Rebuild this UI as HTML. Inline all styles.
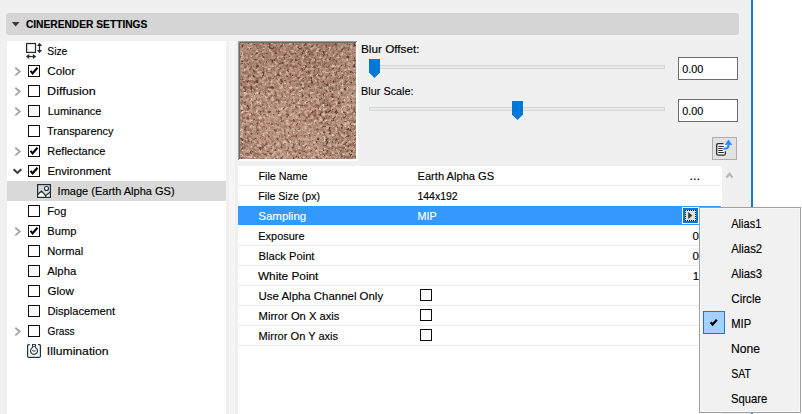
<!DOCTYPE html>
<html><head><meta charset="utf-8"><title>CineRender Settings</title>
<style>
html,body{margin:0;padding:0;}
body{width:802px;height:414px;position:relative;overflow:hidden;background:#f0f0f0;font-family:"Liberation Sans",sans-serif;font-size:12px;}
.ts{left:0;top:0;pointer-events:none;font-family:"Liberation Sans",sans-serif;font-size:11.5px;fill:#000;stroke:#000;stroke-width:0.15px;}
svg{position:absolute;overflow:visible;}
.cb{position:absolute;width:10px;height:10px;border:1px solid #0a0a0a;background:#fff;}
</style></head><body>
<div style="position:absolute;left:753px;top:0px;width:49px;height:414px;background:#fff;"></div>
<div style="position:absolute;left:751px;top:0px;width:2px;height:414px;background:#1478d4;"></div>
<div style="position:absolute;left:6px;top:13px;width:733px;height:22px;background:#d5d5d5;border-radius:3px;"></div>
<svg style="left:11px;top:21px" width="10" height="7" viewBox="0 0 10 7"><path d="M0.8 1 L8.6 1 L4.7 5.6 Z" fill="#3a3a3a"/></svg>
<svg class="ts" width="802" height="414" viewBox="0 0 802 414"><text x="25.88" y="28.00" textLength="121.52" lengthAdjust="spacingAndGlyphs" font-size="11" font-weight="bold">CINERENDER SETTINGS</text></svg>
<div style="position:absolute;left:7px;top:41px;width:219px;height:373px;background:#fff;"></div>
<div style="position:absolute;left:7px;top:181px;width:219px;height:20px;background:#d9d9d9;"></div>
<svg class="ts" width="802" height="414" viewBox="0 0 802 414"><text x="47.34" y="55.00" textLength="20.02" lengthAdjust="spacingAndGlyphs">Size</text><text x="47.21" y="75.00" textLength="27.97" lengthAdjust="spacingAndGlyphs">Color</text></svg>
<svg style="left:14px;top:67px" width="8" height="10" viewBox="0 0 8 10"><path d="M1.3 0.8 L5.8 4.6 L1.3 8.4" fill="none" stroke="#a3a3a3" stroke-width="1.8"/></svg>
<div class="cb" style="left:28px;top:65px"></div>
<svg style="left:28px;top:65px" width="12" height="12" viewBox="0 0 12 12"><path d="M2.6 5.9 L4.6 8.3 L9.5 2.7" fill="none" stroke="#000" stroke-width="2.1"/></svg>
<svg class="ts" width="802" height="414" viewBox="0 0 802 414"><text x="47.07" y="95.00" textLength="48.64" lengthAdjust="spacingAndGlyphs">Diffusion</text></svg>
<svg style="left:14px;top:87px" width="8" height="10" viewBox="0 0 8 10"><path d="M1.3 0.8 L5.8 4.6 L1.3 8.4" fill="none" stroke="#a3a3a3" stroke-width="1.8"/></svg>
<div class="cb" style="left:28px;top:85px"></div>
<svg class="ts" width="802" height="414" viewBox="0 0 802 414"><text x="47.70" y="115.00" textLength="53.68" lengthAdjust="spacingAndGlyphs">Luminance</text></svg>
<svg style="left:14px;top:107px" width="8" height="10" viewBox="0 0 8 10"><path d="M1.3 0.8 L5.8 4.6 L1.3 8.4" fill="none" stroke="#a3a3a3" stroke-width="1.8"/></svg>
<div class="cb" style="left:28px;top:105px"></div>
<svg class="ts" width="802" height="414" viewBox="0 0 802 414"><text x="47.06" y="135.00" textLength="66.46" lengthAdjust="spacingAndGlyphs">Transparency</text></svg>
<div class="cb" style="left:28px;top:125px"></div>
<svg class="ts" width="802" height="414" viewBox="0 0 802 414"><text x="47.30" y="155.00" textLength="58.08" lengthAdjust="spacingAndGlyphs">Reflectance</text></svg>
<svg style="left:14px;top:147px" width="8" height="10" viewBox="0 0 8 10"><path d="M1.3 0.8 L5.8 4.6 L1.3 8.4" fill="none" stroke="#a3a3a3" stroke-width="1.8"/></svg>
<div class="cb" style="left:28px;top:145px"></div>
<svg style="left:28px;top:145px" width="12" height="12" viewBox="0 0 12 12"><path d="M2.6 5.9 L4.6 8.3 L9.5 2.7" fill="none" stroke="#000" stroke-width="2.1"/></svg>
<svg class="ts" width="802" height="414" viewBox="0 0 802 414"><text x="47.48" y="175.00" textLength="63.20" lengthAdjust="spacingAndGlyphs">Environment</text></svg>
<svg style="left:12px;top:168px" width="11" height="7" viewBox="0 0 11 7"><path d="M1.6 1.2 L5.45 4.9 L9.3 1.2" fill="none" stroke="#3a3a3a" stroke-width="2"/></svg>
<div class="cb" style="left:28px;top:165px"></div>
<svg style="left:28px;top:165px" width="12" height="12" viewBox="0 0 12 12"><path d="M2.6 5.9 L4.6 8.3 L9.5 2.7" fill="none" stroke="#000" stroke-width="2.1"/></svg>
<svg class="ts" width="802" height="414" viewBox="0 0 802 414"><text x="57.59" y="195.00" textLength="117.00" lengthAdjust="spacingAndGlyphs">Image (Earth Alpha GS)</text></svg>
<svg style="left:37px;top:184px" width="14" height="14" viewBox="0 0 14 14"><path d="M0.6 10.5 L4.5 7.2 L8.6 11.7 L13.4 8.1 V13.4 H0.6 Z" fill="#fff"/><g fill="none" stroke="#222c33" stroke-width="1.2"><rect x="0.6" y="0.6" width="12.8" height="12.8"/><path d="M0.6 10.5 L4.5 7.2 L8.6 11.7 L13.4 8.1 M8.6 11.7 V13.4"/><circle cx="9.5" cy="4.5" r="2" fill="#fff" stroke-width="1.1"/></g></svg>
<svg class="ts" width="802" height="414" viewBox="0 0 802 414"><text x="47.30" y="215.00" textLength="19.01" lengthAdjust="spacingAndGlyphs">Fog</text></svg>
<div class="cb" style="left:28px;top:205px"></div>
<svg class="ts" width="802" height="414" viewBox="0 0 802 414"><text x="47.29" y="235.00" textLength="29.07" lengthAdjust="spacingAndGlyphs">Bump</text></svg>
<svg style="left:14px;top:227px" width="8" height="10" viewBox="0 0 8 10"><path d="M1.3 0.8 L5.8 4.6 L1.3 8.4" fill="none" stroke="#a3a3a3" stroke-width="1.8"/></svg>
<div class="cb" style="left:28px;top:225px"></div>
<svg style="left:28px;top:225px" width="12" height="12" viewBox="0 0 12 12"><path d="M2.6 5.9 L4.6 8.3 L9.5 2.7" fill="none" stroke="#000" stroke-width="2.1"/></svg>
<svg class="ts" width="802" height="414" viewBox="0 0 802 414"><text x="47.29" y="255.00" textLength="35.95" lengthAdjust="spacingAndGlyphs">Normal</text></svg>
<div class="cb" style="left:28px;top:245px"></div>
<svg class="ts" width="802" height="414" viewBox="0 0 802 414"><text x="47.28" y="275.00" textLength="29.02" lengthAdjust="spacingAndGlyphs">Alpha</text></svg>
<div class="cb" style="left:28px;top:265px"></div>
<svg class="ts" width="802" height="414" viewBox="0 0 802 414"><text x="47.52" y="295.00" textLength="26.45" lengthAdjust="spacingAndGlyphs">Glow</text></svg>
<div class="cb" style="left:28px;top:285px"></div>
<svg class="ts" width="802" height="414" viewBox="0 0 802 414"><text x="47.49" y="315.00" textLength="67.59" lengthAdjust="spacingAndGlyphs">Displacement</text></svg>
<div class="cb" style="left:28px;top:305px"></div>
<svg class="ts" width="802" height="414" viewBox="0 0 802 414"><text x="47.59" y="335.00" textLength="26.97" lengthAdjust="spacingAndGlyphs">Grass</text></svg>
<svg style="left:14px;top:327px" width="8" height="10" viewBox="0 0 8 10"><path d="M1.3 0.8 L5.8 4.6 L1.3 8.4" fill="none" stroke="#a3a3a3" stroke-width="1.8"/></svg>
<div class="cb" style="left:28px;top:325px"></div>
<svg class="ts" width="802" height="414" viewBox="0 0 802 414"><text x="46.88" y="355.00" textLength="61.70" lengthAdjust="spacingAndGlyphs">Illumination</text></svg>
<svg style="left:25px;top:42px" width="18" height="18" viewBox="0 0 18 18"><rect x="1.6" y="1.5" width="8.9" height="8.9" fill="none" stroke="#212c33" stroke-width="1.25"/><g fill="#212c33" stroke="none"><path d="M11.9 4.1 L14.5 0.8 L17.1 4.1 Z M11.9 7.9 L14.5 11.2 L17.1 7.9 Z"/><rect x="13.9" y="3" width="1.2" height="6"/><path d="M4.2 11.9 L0.9 14.5 L4.2 17.1 Z M7.9 11.9 L11.2 14.5 L7.9 17.1 Z"/><rect x="3" y="13.9" width="6" height="1.2"/></g></svg>
<svg style="left:27px;top:344px" width="14" height="14" viewBox="0 0 14 14"><g fill="none" stroke="#25323a" stroke-width="1.2"><path d="M2.8 0.6 H1.8 Q0.6 0.6 0.6 1.8 V12.2 Q0.6 13.4 1.8 13.4 H12.2 Q13.4 13.4 13.4 12.2 V1.8 Q13.4 0.6 12.2 0.6 H11"/><rect x="5.5" y="0.5" width="3" height="1.8" stroke-width="0.9"/><path d="M5.5 2.3 L5.3 3.84 A3.5 3.5 0 1 0 8.7 3.84 L8.5 2.3" stroke-width="1.15"/><path d="M5.3 6.1 L6.3 7.4 L7 6.3 L7.8 7.5 L8.7 6.5" stroke-width="0.85"/></g></svg>
<div style="position:absolute;left:229px;top:41px;width:6px;height:373px;background:#f6f6f6;"></div>
<svg style="left:238px;top:41px" width="120" height="120" viewBox="0 0 120 120">
<defs><filter id="tx" x="0" y="0" width="100%" height="100%" color-interpolation-filters="sRGB">
<feTurbulence type="fractalNoise" baseFrequency="0.33" numOctaves="3" seed="11" result="n"/>
<feColorMatrix in="n" type="matrix" values="0.55 0 0 0 0.395  0.55 0 0 0 0.245  0.52 0 0 0 0.185  0 0 0 0 1" result="c"/>
<feColorMatrix in="n" type="matrix" values="0 0 0 0 0.87  0 0 0 0 0.79  0 0 0 0 0.73  0 5 0 0 -2.85" result="hi"/>
<feColorMatrix in="n" type="matrix" values="0 0 0 0 0.36  0 0 0 0 0.23  0 0 0 0 0.19  0 0 5 0 -2.85" result="lo"/>
<feTurbulence type="fractalNoise" baseFrequency="0.03" numOctaves="2" seed="4" result="l"/>
<feColorMatrix in="l" type="matrix" values="0 0 0 0 0.78  0 0 0 0 0.66  0 0 0 0 0.59  0.9 0 0 0 -0.3" result="lw"/>
<feComposite in="lw" in2="c" operator="over" result="c2"/>
<feComposite in="hi" in2="c2" operator="over" result="c3"/>
<feComposite in="lo" in2="c3" operator="over" result="c4"/>
<feGaussianBlur in="c4" stdDeviation="0.35"/>
</filter><radialGradient id="lg" cx="0.33" cy="0.72" r="0.45"><stop offset="0" stop-color="#d6b096" stop-opacity="0.26"/><stop offset="1" stop-color="#d6b096" stop-opacity="0"/></radialGradient><linearGradient id="dg" x1="0" y1="0" x2="0" y2="1"><stop offset="0" stop-color="#7a5040" stop-opacity="0.16"/><stop offset="0.5" stop-color="#7a5040" stop-opacity="0"/></linearGradient></defs>
<rect x="0" y="0" width="120" height="120" fill="#fff"/>
<rect x="2" y="2" width="116" height="116" fill="#a8856f" filter="url(#tx)"/>
<rect x="2" y="2" width="116" height="116" fill="url(#lg)"/>
<rect x="2" y="2" width="116" height="116" fill="url(#dg)"/>
<path d="M0.5 119 V0.5 H119" fill="none" stroke="#9a9a9a" stroke-width="1"/>
<path d="M1.5 118 V1.5 H118" fill="none" stroke="#6a6a6a" stroke-width="1"/>
</svg>
<svg class="ts" width="802" height="414" viewBox="0 0 802 414"><text x="361.04" y="52.70" textLength="58.42" lengthAdjust="spacingAndGlyphs">Blur Offset:</text><text x="361.11" y="94.90" textLength="52.47" lengthAdjust="spacingAndGlyphs">Blur Scale:</text></svg>
<div style="position:absolute;left:369px;top:65px;width:296px;height:4px;background:#e7eaea;box-sizing:border-box;border:1px solid #d6d6d6;"></div>
<svg style="left:369px;top:59px" width="11" height="19" viewBox="0 0 11 19"><path d="M0 0 H11 V13.4 L5.5 19 L0 13.4 Z" fill="#0078d7"/></svg>
<div style="position:absolute;left:369px;top:107px;width:296px;height:4px;background:#e7eaea;box-sizing:border-box;border:1px solid #d6d6d6;"></div>
<svg style="left:512px;top:101px" width="11" height="19" viewBox="0 0 11 19"><path d="M0 0 H11 V13.4 L5.5 19 L0 13.4 Z" fill="#0078d7"/></svg>
<div style="position:absolute;left:678px;top:57px;width:60px;height:23px;background:#fff;box-sizing:border-box;border:1px solid #6d6d6d;"></div>
<svg class="ts" width="802" height="414" viewBox="0 0 802 414"><text x="682.18" y="73.00" textLength="21.04" lengthAdjust="spacingAndGlyphs">0.00</text></svg>
<div style="position:absolute;left:678px;top:99px;width:60px;height:23px;background:#fff;box-sizing:border-box;border:1px solid #6d6d6d;"></div>
<svg class="ts" width="802" height="414" viewBox="0 0 802 414"><text x="682.18" y="115.00" textLength="21.04" lengthAdjust="spacingAndGlyphs">0.00</text></svg>
<div style="position:absolute;left:712px;top:137px;width:25px;height:23px;background:#e1e1e1;box-sizing:border-box;border:1px solid #adadad;"></div>
<svg style="left:712px;top:137px" width="25" height="23" viewBox="0 0 25 23"><rect x="4.7" y="6.7" width="8.6" height="11.5" rx="1.5" fill="#f7f7f7"/><g fill="none" stroke="#262e33" stroke-width="1.3"><path d="M11.4 6.7 H6.2 Q4.7 6.7 4.7 8.2 V16.7 Q4.7 18.2 6.2 18.2 H11.8 Q13.3 18.2 13.3 16.7 V14.2"/><path d="M6.3 9.5 H11.8 M6.3 11.5 H10.6 M6.3 13.5 H10.6 M6.3 15.45 H11.8" stroke-width="1.05"/></g><path d="M16.5 7 V8.4 Q16.5 11.6 12.2 11.7" fill="none" stroke="#2a8bff" stroke-width="2.1" stroke-linecap="round"/><path d="M12.7 8.1 L16.5 2.6 L20.3 8.1 L16.5 7.4 Z" fill="#2a8bff"/></svg>
<div style="position:absolute;left:238px;top:166px;width:484px;height:248px;background:#fff;"></div>
<div style="position:absolute;left:238px;top:185px;width:483px;height:1px;background:#ebebeb;"></div>
<div style="position:absolute;left:238px;top:245px;width:483px;height:1px;background:#ebebeb;"></div>
<div style="position:absolute;left:238px;top:265px;width:483px;height:1px;background:#ebebeb;"></div>
<div style="position:absolute;left:238px;top:285px;width:483px;height:1px;background:#ebebeb;"></div>
<div style="position:absolute;left:238px;top:305px;width:483px;height:1px;background:#ebebeb;"></div>
<div style="position:absolute;left:238px;top:325px;width:483px;height:1px;background:#ebebeb;"></div>
<div style="position:absolute;left:238px;top:345px;width:483px;height:1px;background:#ebebeb;"></div>
<div style="position:absolute;left:238px;top:206px;width:483px;height:19px;background:#3399ff;"></div>
<svg class="ts" width="802" height="414" viewBox="0 0 802 414"><text x="258.42" y="180.00" textLength="49.16" lengthAdjust="spacingAndGlyphs">File Name</text><text x="258.33" y="200.00" textLength="61.72" lengthAdjust="spacingAndGlyphs">File Size (px)</text><text x="258.28" y="220.00" textLength="47.95" lengthAdjust="spacingAndGlyphs" fill="#fff" stroke="#fff">Sampling</text><text x="258.30" y="240.00" textLength="46.29" lengthAdjust="spacingAndGlyphs">Exposure</text><text x="258.58" y="260.00" textLength="55.89" lengthAdjust="spacingAndGlyphs">Black Point</text><text x="257.95" y="280.00" textLength="60.43" lengthAdjust="spacingAndGlyphs">White Point</text><text x="258.62" y="300.00" textLength="124.50" lengthAdjust="spacingAndGlyphs">Use Alpha Channel Only</text><text x="258.58" y="320.00" textLength="80.82" lengthAdjust="spacingAndGlyphs">Mirror On X axis</text><text x="258.59" y="340.00" textLength="79.51" lengthAdjust="spacingAndGlyphs">Mirror On Y axis</text><text x="417.49" y="180.00" textLength="76.71" lengthAdjust="spacingAndGlyphs">Earth Alpha GS</text><text x="417.40" y="200.00" textLength="40.32" lengthAdjust="spacingAndGlyphs">144x192</text><text x="417.52" y="220.00" textLength="19.14" lengthAdjust="spacingAndGlyphs" fill="#fff" stroke="#fff">MIP</text><text x="689.44" y="180.30" textLength="10.61" lengthAdjust="spacingAndGlyphs" font-size="13">...</text><text x="692.55" y="240.00" textLength="6.40" lengthAdjust="spacingAndGlyphs">0</text><text x="692.55" y="260.00" textLength="6.40" lengthAdjust="spacingAndGlyphs">0</text><text x="692.73" y="280.00" textLength="6.40" lengthAdjust="spacingAndGlyphs">1</text></svg>
<div class="cb" style="left:420px;top:289px"></div>
<div class="cb" style="left:420px;top:309px"></div>
<div class="cb" style="left:420px;top:329px"></div>
<svg style="left:725px;top:171px" width="9" height="8" viewBox="0 0 9 8"><path d="M1.4 6.5 L4.5 2.7 L7.6 6.5" fill="none" stroke="#b8b8b8" stroke-width="2.2"/></svg>
<div style="position:absolute;left:682px;top:207px;width:17px;height:17px;background:#fff;"></div>
<div style="position:absolute;left:683px;top:208px;width:15px;height:15px;background:#0078d7;"></div>
<div style="position:absolute;left:685px;top:210px;width:11px;height:11px;background:#e1e1e1;box-sizing:border-box;border:1px dotted #000;"></div>
<svg style="left:685px;top:210px" width="11" height="11" viewBox="0 0 11 11"><path d="M3.2 2 L7.3 5.5 L3.2 9 Z" fill="#3a3a3a"/></svg>
<div style="position:absolute;left:699px;top:207px;width:102px;height:206px;background:#f1f1f1;box-sizing:border-box;border:1px solid #a0a0a0;box-shadow:inset 0 0 0 1px #f8f8f8;"></div>
<div style="position:absolute;left:703px;top:311px;width:22px;height:23px;background:#a4d1ff;box-sizing:border-box;border:1px solid #2a73c0;"></div>
<svg style="left:703px;top:311px" width="22" height="23" viewBox="0 0 22 23"><path d="M7.6 11.2 L9.6 13.5 L13.8 8.8" fill="none" stroke="#000" stroke-width="2.3"/></svg>
<svg class="ts" width="802" height="414" viewBox="0 0 802 414"><text x="731.28" y="227.90" textLength="30.05" lengthAdjust="spacingAndGlyphs" font-size="12.2">Alias1</text><text x="731.28" y="252.90" textLength="30.89" lengthAdjust="spacingAndGlyphs" font-size="12.2">Alias2</text><text x="731.28" y="277.90" textLength="30.81" lengthAdjust="spacingAndGlyphs" font-size="12.2">Alias3</text><text x="731.22" y="302.90" textLength="29.79" lengthAdjust="spacingAndGlyphs" font-size="12.2">Circle</text><text x="731.28" y="327.90" textLength="19.90" lengthAdjust="spacingAndGlyphs" font-size="12.2">MIP</text><text x="731.10" y="352.90" textLength="29.04" lengthAdjust="spacingAndGlyphs" font-size="12.2">None</text><text x="731.33" y="377.90" textLength="19.71" lengthAdjust="spacingAndGlyphs" font-size="12.2">SAT</text><text x="731.09" y="402.90" textLength="36.31" lengthAdjust="spacingAndGlyphs" font-size="12.2">Square</text></svg>
</body></html>
